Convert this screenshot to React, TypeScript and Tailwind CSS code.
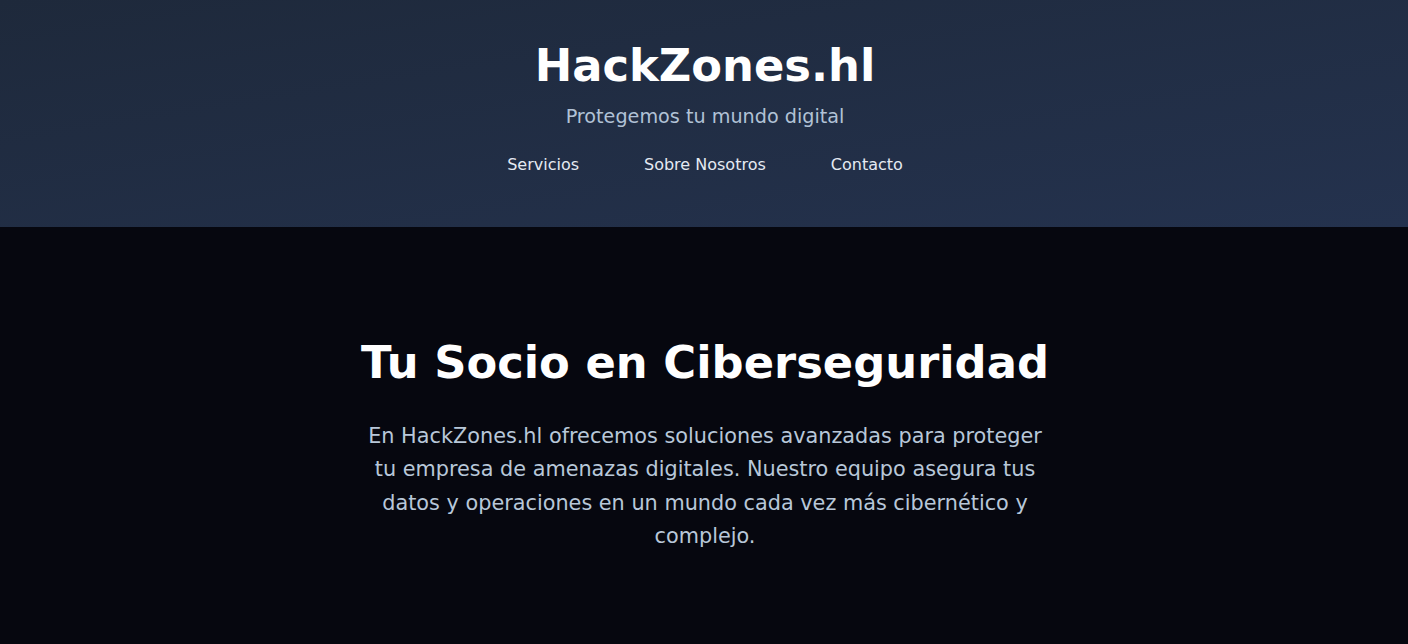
import React from "react";

export default function App() {
  return (
    <div className="min-h-screen bg-[#06070f] font-['DejaVu_Sans',sans-serif]">
      <header className="h-[227px] bg-gradient-to-br from-[#1e293b] to-[#24324e] flex flex-col items-center pt-[40px] pl-[2px]">
        <h1 className="text-[44.8px] font-bold text-white leading-[1.164]">HackZones.hl</h1>
        <p className="mt-[14px] text-[19.2px] text-[#b1c2d6] leading-[1.164]">Protegemos tu mundo digital</p>
        <nav className="mt-[25px] flex items-center gap-[65px] text-[16px] text-[#e5eaf2]">
          <a>Servicios</a>
          <a>Sobre Nosotros</a>
          <a>Contacto</a>
        </nav>
      </header>
      <main className="flex flex-col items-center pt-[110px] pl-[2px]">
        <h2 className="text-[44.8px] font-bold text-white leading-[1.164]">Tu Socio en Ciberseguridad</h2>
        <p className="mt-[31px] max-w-[690px] text-center text-[20.8px] leading-[1.6] text-[#b8c7d9]">
          En HackZones.hl ofrecemos soluciones avanzadas para proteger tu empresa de amenazas digitales. Nuestro equipo asegura tus datos y operaciones en un mundo cada vez más cibernético y complejo.
        </p>
      </main>
    </div>
  );
}
